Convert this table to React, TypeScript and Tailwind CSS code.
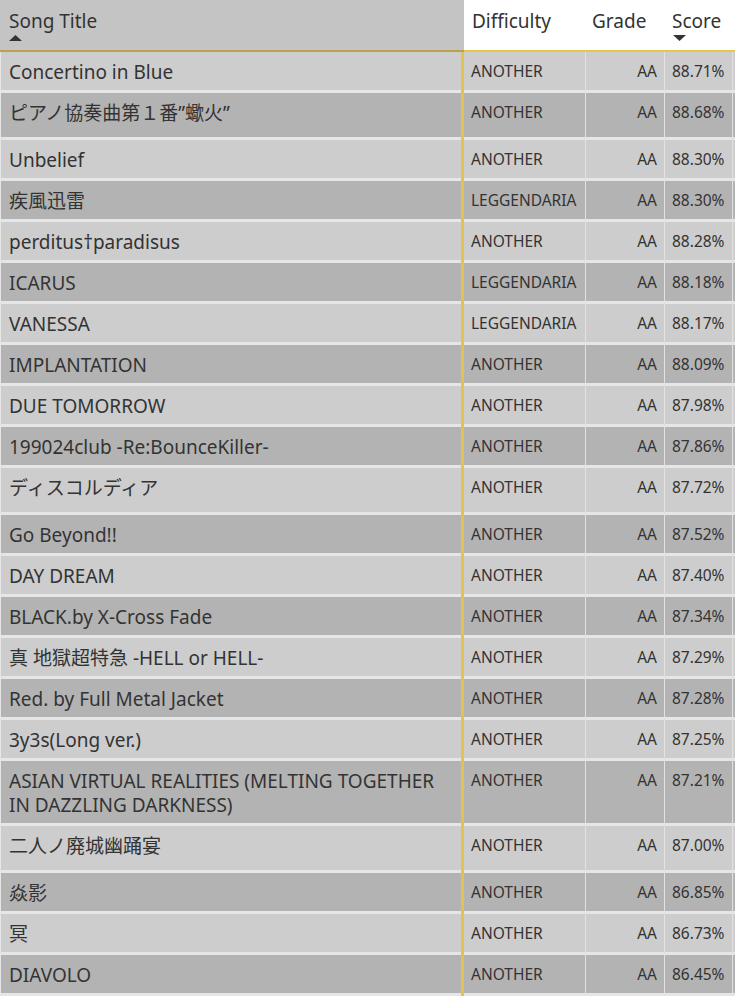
import React from "react";

type Row = { title: string; diff: string; grade: string; score: string; tall?: boolean };

const rows: Row[] = [
  { title: "Concertino in Blue", diff: "ANOTHER", grade: "AA", score: "88.71%" },
  { title: "ピアノ協奏曲第１番”蠍火”", diff: "ANOTHER", grade: "AA", score: "88.68%", tall: true },
  { title: "Unbelief", diff: "ANOTHER", grade: "AA", score: "88.30%" },
  { title: "疾風迅雷", diff: "LEGGENDARIA", grade: "AA", score: "88.30%" },
  { title: "perditus†paradisus", diff: "ANOTHER", grade: "AA", score: "88.28%" },
  { title: "ICARUS", diff: "LEGGENDARIA", grade: "AA", score: "88.18%" },
  { title: "VANESSA", diff: "LEGGENDARIA", grade: "AA", score: "88.17%" },
  { title: "IMPLANTATION", diff: "ANOTHER", grade: "AA", score: "88.09%" },
  { title: "DUE TOMORROW", diff: "ANOTHER", grade: "AA", score: "87.98%" },
  { title: "199024club -Re:BounceKiller-", diff: "ANOTHER", grade: "AA", score: "87.86%" },
  { title: "ディスコルディア", diff: "ANOTHER", grade: "AA", score: "87.72%", tall: true },
  { title: "Go Beyond!!", diff: "ANOTHER", grade: "AA", score: "87.52%" },
  { title: "DAY DREAM", diff: "ANOTHER", grade: "AA", score: "87.40%" },
  { title: "BLACK.by X-Cross Fade", diff: "ANOTHER", grade: "AA", score: "87.34%" },
  { title: "真 地獄超特急 -HELL or HELL-", diff: "ANOTHER", grade: "AA", score: "87.29%" },
  { title: "Red. by Full Metal Jacket", diff: "ANOTHER", grade: "AA", score: "87.28%" },
  { title: "3y3s(Long ver.)", diff: "ANOTHER", grade: "AA", score: "87.25%" },
  {
    title: "ASIAN VIRTUAL REALITIES (MELTING TOGETHER IN DAZZLING DARKNESS)",
    diff: "ANOTHER",
    grade: "AA",
    score: "87.21%",
  },
  { title: "二人ノ廃城幽踊宴", diff: "ANOTHER", grade: "AA", score: "87.00%", tall: true },
  { title: "焱影", diff: "ANOTHER", grade: "AA", score: "86.85%" },
  { title: "冥", diff: "ANOTHER", grade: "AA", score: "86.73%" },
  { title: "DIAVOLO", diff: "ANOTHER", grade: "AA", score: "86.45%" },
];

function UpArrow() {
  return (
    <svg width="13" height="6" viewBox="0 0 13 6" className="block">
      <polygon points="0,6 6.5,0 13,6" fill="#333333" />
    </svg>
  );
}

function DownArrow() {
  return (
    <svg width="13" height="6" viewBox="0 0 13 6" className="block">
      <polygon points="0,0 13,0 6.5,6" fill="#333333" />
    </svg>
  );
}

export default function App() {
  return (
    <div
      className="w-[735px] h-[996px] overflow-hidden bg-white text-[#333333]"
      style={{ fontFamily: '"Noto Sans", "Noto Sans CJK JP", sans-serif' }}
    >
      {/* Header */}
      <div className="flex h-[52px] text-[19px] leading-[24px]">
        <div className="w-[464px] shrink-0 bg-[#c4c4c4] border-b-2 border-[#bca24a] pl-[9px] pt-[9px]">
          <div>Song Title</div>
          <div className="mt-[2px]">
            <UpArrow />
          </div>
        </div>
        <div className="w-[122px] shrink-0 border-b-2 border-[#e6c54c] pl-[8px] pt-[9px]">Difficulty</div>
        <div className="w-[79px] shrink-0 border-b-2 border-[#e6c54c] pl-[6px] pt-[9px]">Grade</div>
        <div className="w-[68px] shrink-0 border-b-2 border-[#e6c54c] pl-[7px] pt-[9px]">
          <div>Score</div>
          <div className="mt-[2px] pl-px">
            <DownArrow />
          </div>
        </div>
        <div className="flex-1 border-b-2 border-[#e6c54c]" />
      </div>

      {/* Body */}
      <div className="border-l border-[#e6e6e6]">
        {rows.map((r, i) => {
          const bg = i % 2 === 0 ? "bg-[#cdcdcd]" : "bg-[#b3b3b3]";
          const pb = r.tall ? "pb-[12px]" : "pb-[6px]";
          const pbs = r.tall ? "pb-[13px]" : "pb-[7px]";
          return (
            <div key={i} className="flex">
              <div
                className={`w-[460px] shrink-0 ${bg} border-b-[3px] border-[#e6e6e6] pl-[8px] pr-[10px] pt-[8px] ${pb} text-[19px] leading-[24px]`}
              >
                {r.title}
              </div>
              <div className="w-[3px] shrink-0 bg-[#e2c250]" />
              <div
                className={`w-[121px] shrink-0 ${bg} border-b-[3px] border-[#e6e6e6] pl-[7px] pt-[7px] ${pbs} text-[15.5px] leading-[24px]`}
              >
                {r.diff}
              </div>
              <div className="w-px shrink-0 bg-[#e2e2e2]" />
              <div
                className={`w-[78px] shrink-0 ${bg} border-b-[3px] border-[#e6e6e6] pr-[7px] pt-[7px] ${pbs} text-right text-[15.5px] leading-[24px]`}
              >
                {r.grade}
              </div>
              <div className="w-px shrink-0 bg-[#e2e2e2]" />
              <div
                className={`w-[67px] shrink-0 ${bg} border-b-[3px] border-[#e6e6e6] pl-[7px] pt-[7px] ${pbs} text-[15.5px] leading-[24px] whitespace-nowrap`}
              >
                {r.score}
              </div>
              <div className="w-px shrink-0 bg-[#e2e2e2]" />
              <div className={`flex-1 ${bg} border-b-[3px] border-[#e6e6e6]`} />
            </div>
          );
        })}
      </div>
    </div>
  );
}
